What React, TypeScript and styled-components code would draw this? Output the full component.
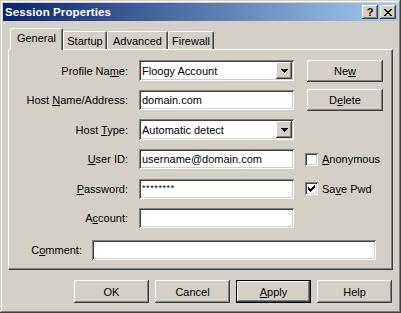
import React from "react";
import styled, { createGlobalStyle } from "styled-components";

const GlobalStyle = createGlobalStyle`
  html, body {
    margin: 0;
    padding: 0;
    background: #d4d0c8;
  }
  body {
    font-family: "Liberation Sans", Arial, sans-serif;
    font-size: 11px;
    color: #000;
  }
`;

const raised = `
  box-shadow:
    inset -1px -1px #404040,
    inset 1px 1px #ffffff,
    inset -2px -2px #808080,
    inset 2px 2px #d4d0c8;
`;

const sunken = `
  box-shadow:
    inset 1px 1px #808080,
    inset -1px -1px #ffffff,
    inset 2px 2px #404040,
    inset -2px -2px #d4d0c8;
`;

const Window = styled.div`
  width: 401px;
  height: 313px;
  box-sizing: border-box;
  padding: 3px;
  background: #d4d0c8;
  display: flex;
  flex-direction: column;
  box-shadow:
    inset -1px -1px #404040,
    inset 1px 1px #d4d0c8,
    inset -2px -2px #808080,
    inset 2px 2px #ffffff;
`;

const TitleBar = styled.div`
  height: 18px;
  flex-shrink: 0;
  display: flex;
  align-items: center;
  padding: 0 2px 0 2px;
  background: linear-gradient(to right, #0a246a, #a6caf0);
`;

const Title = styled.span`
  flex: 1;
  color: #fff;
  font-weight: bold;
  font-size: 11.5px;
  letter-spacing: 0.1px;
`;

const CaptionButton = styled.button`
  width: 16px;
  height: 14px;
  padding: 0;
  border: none;
  margin-left: 2px;
  background: #d4d0c8;
  display: flex;
  align-items: center;
  justify-content: center;
  font-family: "Liberation Sans", Arial, sans-serif;
  font-weight: bold;
  font-size: 11px;
  line-height: 1;
  color: #000;
  ${raised}
`;

const TabStrip = styled.div`
  height: 28px;
  flex-shrink: 0;
  display: flex;
  align-items: flex-end;
  padding-left: 7px;
`;

const Tab = styled.div<{ $active?: boolean; $w: number }>`
  position: relative;
  z-index: ${(p) => (p.$active ? 1 : 0)};
  box-sizing: border-box;
  width: ${(p) => p.$w}px;
  height: ${(p) => (p.$active ? 22 : 18)}px;
  margin-bottom: ${(p) => (p.$active ? -1 : 0)}px;
  padding-bottom: ${(p) => (p.$active ? 3 : 0)}px;
  display: flex;
  align-items: center;
  justify-content: center;
  background: #d4d0c8;
  border-top: 1px solid #fff;
  border-left: 1px solid #fff;
  border-right: 1px solid #404040;
  border-top-left-radius: 2px;
  border-top-right-radius: 2px;
  box-shadow: inset -1px 0 #808080;
  font-size: 11px;
`;

const Panel = styled.div`
  height: 221px;
  box-sizing: border-box;
  margin: 0 5px;
  padding: 10px 0 0 2px;
  border-top: 1px solid #fff;
  border-left: 1px solid #fff;
  border-right: 1px solid #404040;
  border-bottom: 1px solid #404040;
  box-shadow: inset -1px -1px #808080;
`;

const FormGrid = styled.div`
  display: grid;
  grid-template-columns: 117px 155px 1fr;
  grid-auto-rows: 21px;
  column-gap: 11px;
  row-gap: 8.5px;
  align-items: center;
`;

const Label = styled.label<{ $w?: number }>`
  text-align: right;
  white-space: nowrap;
  ${(p) => (p.$w ? `width: ${p.$w}px; flex-shrink: 0;` : "")}
`;

const TextBox = styled.div<{ $h?: number; $w?: number }>`
  box-sizing: border-box;
  height: ${(p) => p.$h ?? 20}px;
  ${(p) => (p.$w ? `width: ${p.$w}px;` : "")}
  background: #fff;
  padding: 0 3px;
  display: flex;
  align-items: center;
  white-space: nowrap;
  overflow: hidden;
  ${sunken}
`;

const ComboBox = styled(TextBox)`
  padding: 2px 2px 2px 3px;
`;

const ComboText = styled.span`
  flex: 1;
`;

const DropButton = styled.div`
  width: 16px;
  height: 17px;
  background: #d4d0c8;
  display: flex;
  align-items: center;
  justify-content: center;
  ${raised}
`;

const Masked = styled.span`
  font-size: 9px;
  letter-spacing: 0.6px;
  position: relative;
  top: -1px;
`;

const SideColumn = styled.div`
  padding-left: 2px;
`;

const Button = styled.button<{ $w?: number; $h?: number; $default?: boolean }>`
  width: ${(p) => p.$w ?? 75}px;
  height: ${(p) => p.$h ?? 23}px;
  padding: 0;
  border: none;
  background: #d4d0c8;
  font-family: "Liberation Sans", Arial, sans-serif;
  font-size: 11px;
  color: #000;
  ${(p) =>
    p.$default
      ? `box-shadow:
    inset 0 0 0 1px #000,
    inset -2px -2px #404040,
    inset 2px 2px #ffffff,
    inset -3px -3px #808080,
    inset 3px 3px #d4d0c8;`
      : raised}
`;

const CheckRow = styled.div`
  display: flex;
  align-items: center;
  gap: 4px;
  margin-left: -2px;
`;

const CheckBox = styled.div`
  width: 13px;
  height: 13px;
  box-sizing: border-box;
  background: #fff;
  display: flex;
  align-items: center;
  justify-content: center;
  ${sunken}
`;

const CommentRow = styled.div`
  display: flex;
  align-items: center;
  gap: 10px;
  margin-top: 11.5px;
`;

const ButtonRow = styled.div`
  display: flex;
  justify-content: flex-end;
  gap: 6px;
  margin-top: 10px;
  padding-right: 6px;
`;

function Arrow() {
  return (
    <svg width="7" height="4" viewBox="0 0 7 4" shapeRendering="crispEdges">
      <path d="M0 0h7v1h-1v1h-1v1h-1v1h-1v-1h-1v-1h-1v-1h-1z" fill="#000" />
    </svg>
  );
}

function CheckMark() {
  const rows: [number, number, number][] = [
    [6, 0, 1], [5, 1, 2], [0, 2, 1], [4, 2, 3],
    [0, 3, 2], [3, 3, 3], [0, 4, 5], [1, 5, 3], [2, 6, 1],
  ];
  return (
    <svg width="7" height="7" viewBox="0 0 7 7" shapeRendering="crispEdges">
      {rows.map(([x, y, w], i) => (
        <rect key={i} x={x} y={y} width={w} height={1} fill="#000" />
      ))}
    </svg>
  );
}

function CloseGlyph() {
  return (
    <svg width="8" height="7" viewBox="0 0 8 7" shapeRendering="crispEdges">
      <path
        d="M0 0h2v1h1v1h2v-1h1v-1h2v1h-1v1h-1v1h-1v1h1v1h1v1h1v1h-2v-1h-1v-1h-2v1h-1v1h-2v-1h1v-1h1v-1h1v-1h-1v-1h-1v-1h-1z"
        fill="#000"
      />
    </svg>
  );
}

function Combo({ value }: { value: string }) {
  return (
    <ComboBox $h={21}>
      <ComboText>{value}</ComboText>
      <DropButton>
        <Arrow />
      </DropButton>
    </ComboBox>
  );
}

function Check({ checked, children }: { checked?: boolean; children: React.ReactNode }) {
  return (
    <CheckRow>
      <CheckBox>{checked && <CheckMark />}</CheckBox>
      <span>{children}</span>
    </CheckRow>
  );
}

export default function App() {
  return (
    <>
      <GlobalStyle />
      <Window>
        <TitleBar>
          <Title>Session Properties</Title>
          <CaptionButton>?</CaptionButton>
          <CaptionButton>
            <CloseGlyph />
          </CaptionButton>
        </TitleBar>

        <TabStrip>
          <Tab $active $w={53}>General</Tab>
          <Tab $w={44}>Startup</Tab>
          <Tab $w={61}>Advanced</Tab>
          <Tab $w={46}>Firewall</Tab>
        </TabStrip>

        <Panel>
          <FormGrid>
            <Label>Profile Na<u>m</u>e:</Label>
            <Combo value="Floogy Account" />
            <SideColumn>
              <Button $w={76} $h={22}>Ne<u>w</u></Button>
            </SideColumn>

            <Label>Host <u>N</u>ame/Address:</Label>
            <TextBox>domain.com</TextBox>
            <SideColumn>
              <Button $w={76} $h={22}>D<u>e</u>lete</Button>
            </SideColumn>

            <Label>Host <u>T</u>ype:</Label>
            <Combo value="Automatic detect" />
            <span />

            <Label><u>U</u>ser ID:</Label>
            <TextBox>username@domain.com</TextBox>
            <SideColumn>
              <Check><u>A</u>nonymous</Check>
            </SideColumn>

            <Label><u>P</u>assword:</Label>
            <TextBox>
              <Masked>********</Masked>
            </TextBox>
            <SideColumn>
              <Check checked>Sa<u>v</u>e Pwd</Check>
            </SideColumn>

            <Label>A<u>c</u>count:</Label>
            <TextBox />
            <span />
          </FormGrid>

          <CommentRow>
            <Label $w={71}>C<u>o</u>mment:</Label>
            <TextBox $w={284} />
          </CommentRow>
        </Panel>

        <ButtonRow>
          <Button>OK</Button>
          <Button>Cancel</Button>
          <Button $default>
            <u>A</u>pply
          </Button>
          <Button>Help</Button>
        </ButtonRow>
      </Window>
    </>
  );
}
